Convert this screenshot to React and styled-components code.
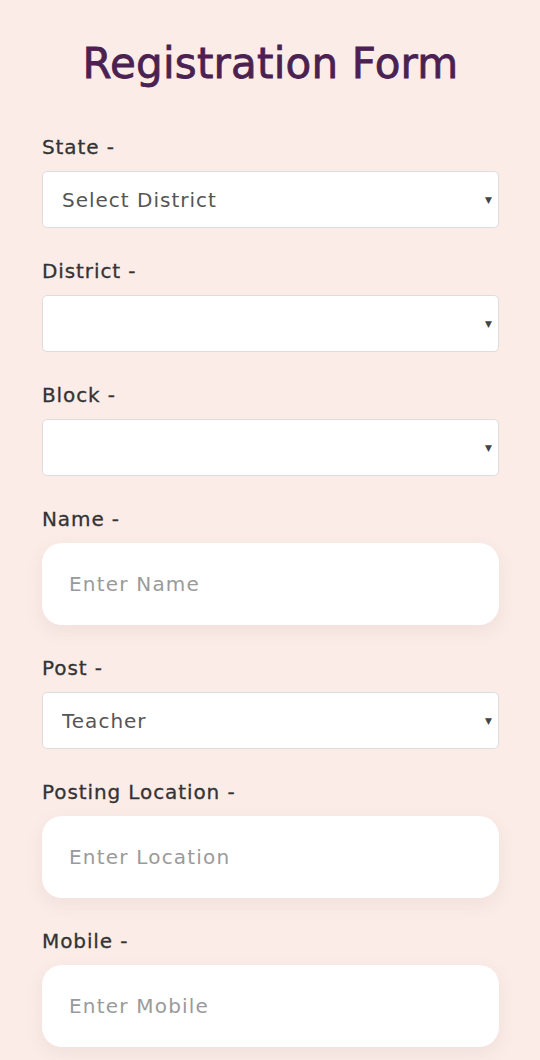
import React from 'react';
import styled, { createGlobalStyle } from 'styled-components';

const Global = createGlobalStyle`
  html, body {
    margin: 0;
    padding: 0;
    background: #fbece8;
  }
  * {
    box-sizing: border-box;
  }
`;

const Page = styled.div`
  width: 540px;
  min-height: 1060px;
  background: #fbece8;
  padding: 36px 41px 0 42px;
  font-family: "DejaVu Sans", "Open Sans", sans-serif;
`;

const Title = styled.h1`
  margin: 0 0 43px;
  text-align: center;
  font-size: 42px;
  line-height: 56px;
  font-weight: 400;
  letter-spacing: 0.2px;
  color: #4a2150;
  -webkit-text-stroke: 0.8px #4a2150;
`;

const Field = styled.div`
  display: flex;
  flex-direction: column;
  gap: 12px;
  margin-bottom: 31px;
`;

const Label = styled.label`
  font-size: 20px;
  line-height: 24px;
  letter-spacing: 0.9px;
  color: #333;
  -webkit-text-stroke: 0.3px #333;
`;

const SelectWrap = styled.div`
  position: relative;

  &::after {
    content: "▼";
    position: absolute;
    right: 7px;
    top: 50%;
    transform: translateY(-50%);
    font-size: 9px;
    color: #444;
    pointer-events: none;
  }
`;

const Select = styled.select`
  appearance: none;
  -webkit-appearance: none;
  width: 100%;
  height: 57px;
  padding: 0 30px 0 19px;
  border: 1px solid #ddd;
  border-radius: 5px;
  background: #fff;
  font-family: inherit;
  font-size: 20px;
  letter-spacing: 1px;
  color: #555;
  outline: none;
`;

const Input = styled.input`
  width: 100%;
  height: 82px;
  padding: 0 27px;
  border: none;
  border-radius: 20px;
  background: #fff;
  box-shadow: 0 6px 18px rgba(120, 80, 70, 0.08);
  font-family: inherit;
  font-size: 20px;
  letter-spacing: 1.2px;
  color: #555;
  outline: none;

  &::placeholder {
    color: #9a9a9a;
  }
`;

function SelectField({ label, value }) {
  return (
    <Field>
      <Label>{label}</Label>
      <SelectWrap>
        <Select defaultValue={value || ''}>
          <option value={value || ''}>{value || ''}</option>
        </Select>
      </SelectWrap>
    </Field>
  );
}

function InputField({ label, placeholder }) {
  return (
    <Field>
      <Label>{label}</Label>
      <Input placeholder={placeholder} />
    </Field>
  );
}

export default function App() {
  return (
    <>
      <Global />
      <Page>
        <Title>Registration Form</Title>
        <SelectField label="State -" value="Select District" />
        <SelectField label="District -" />
        <SelectField label="Block -" />
        <InputField label="Name -" placeholder="Enter Name" />
        <SelectField label="Post -" value="Teacher" />
        <InputField label="Posting Location -" placeholder="Enter Location" />
        <InputField label="Mobile -" placeholder="Enter Mobile" />
      </Page>
    </>
  );
}
